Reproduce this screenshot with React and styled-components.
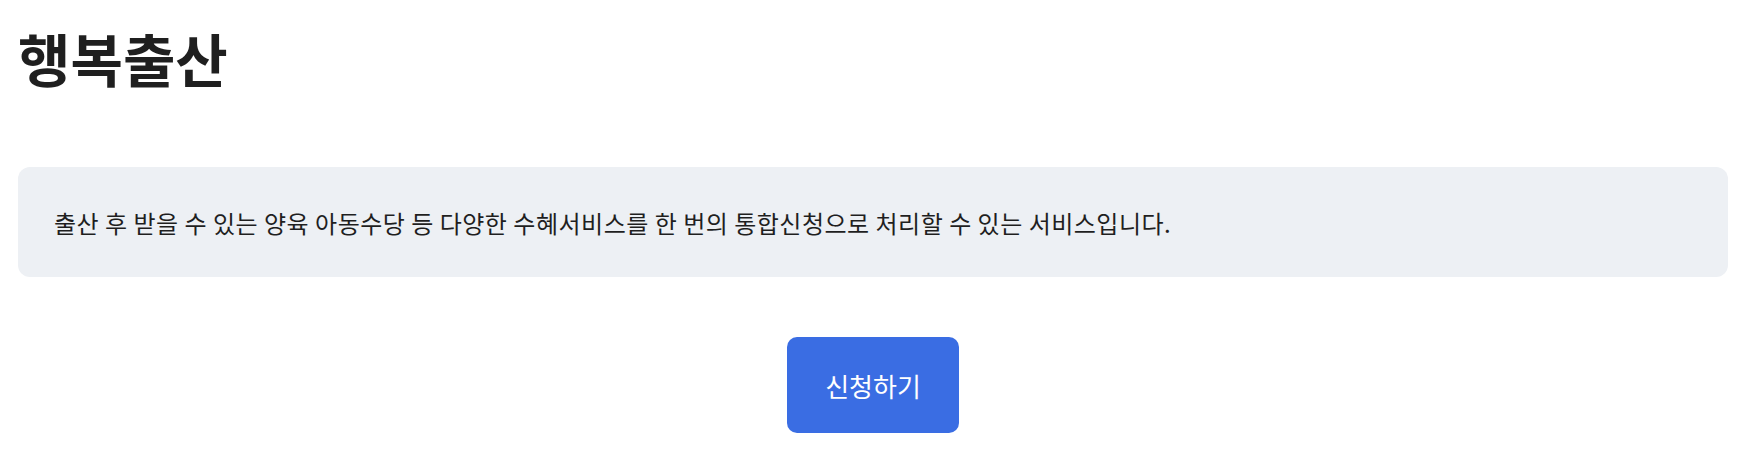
import React from 'react';
import styled, { createGlobalStyle } from 'styled-components';

const GlobalStyle = createGlobalStyle`
  body {
    margin: 0;
    background: #ffffff;
    font-family: "Noto Sans CJK KR", "Noto Sans", sans-serif;
    color: #222222;
  }
`;

const Page = styled.div`
  width: 1710px;
  padding: 0 28px 0 18px;
  display: flex;
  flex-direction: column;
`;

const Title = styled.h1`
  margin: 19px 0 0;
  font-size: 57px;
  font-weight: 700;
  line-height: 76px;
  color: #1f1f1f;
`;

const InfoBox = styled.div`
  margin-top: 72px;
  height: 110px;
  padding: 0 36px;
  display: flex;
  align-items: center;
  background: #edf0f4;
  border-radius: 12px;
  font-size: 24px;
  letter-spacing: 0.5px;
  color: #1f1f1f;
`;

const Actions = styled.div`
  display: flex;
  justify-content: center;
  margin-top: 60px;
`;

const ApplyButton = styled.button`
  width: 172px;
  height: 96px;
  border: none;
  border-radius: 10px;
  background: #3a6de3;
  color: #ffffff;
  font-family: inherit;
  font-size: 26px;
  cursor: pointer;
`;

const App = () => (
  <>
    <GlobalStyle />
    <Page>
      <Title>행복출산</Title>
      <InfoBox>
        출산 후 받을 수 있는 양육 아동수당 등 다양한 수혜서비스를 한 번의 통합신청으로 처리할 수 있는 서비스입니다.
      </InfoBox>
      <Actions>
        <ApplyButton>신청하기</ApplyButton>
      </Actions>
    </Page>
  </>
);

export default App;
